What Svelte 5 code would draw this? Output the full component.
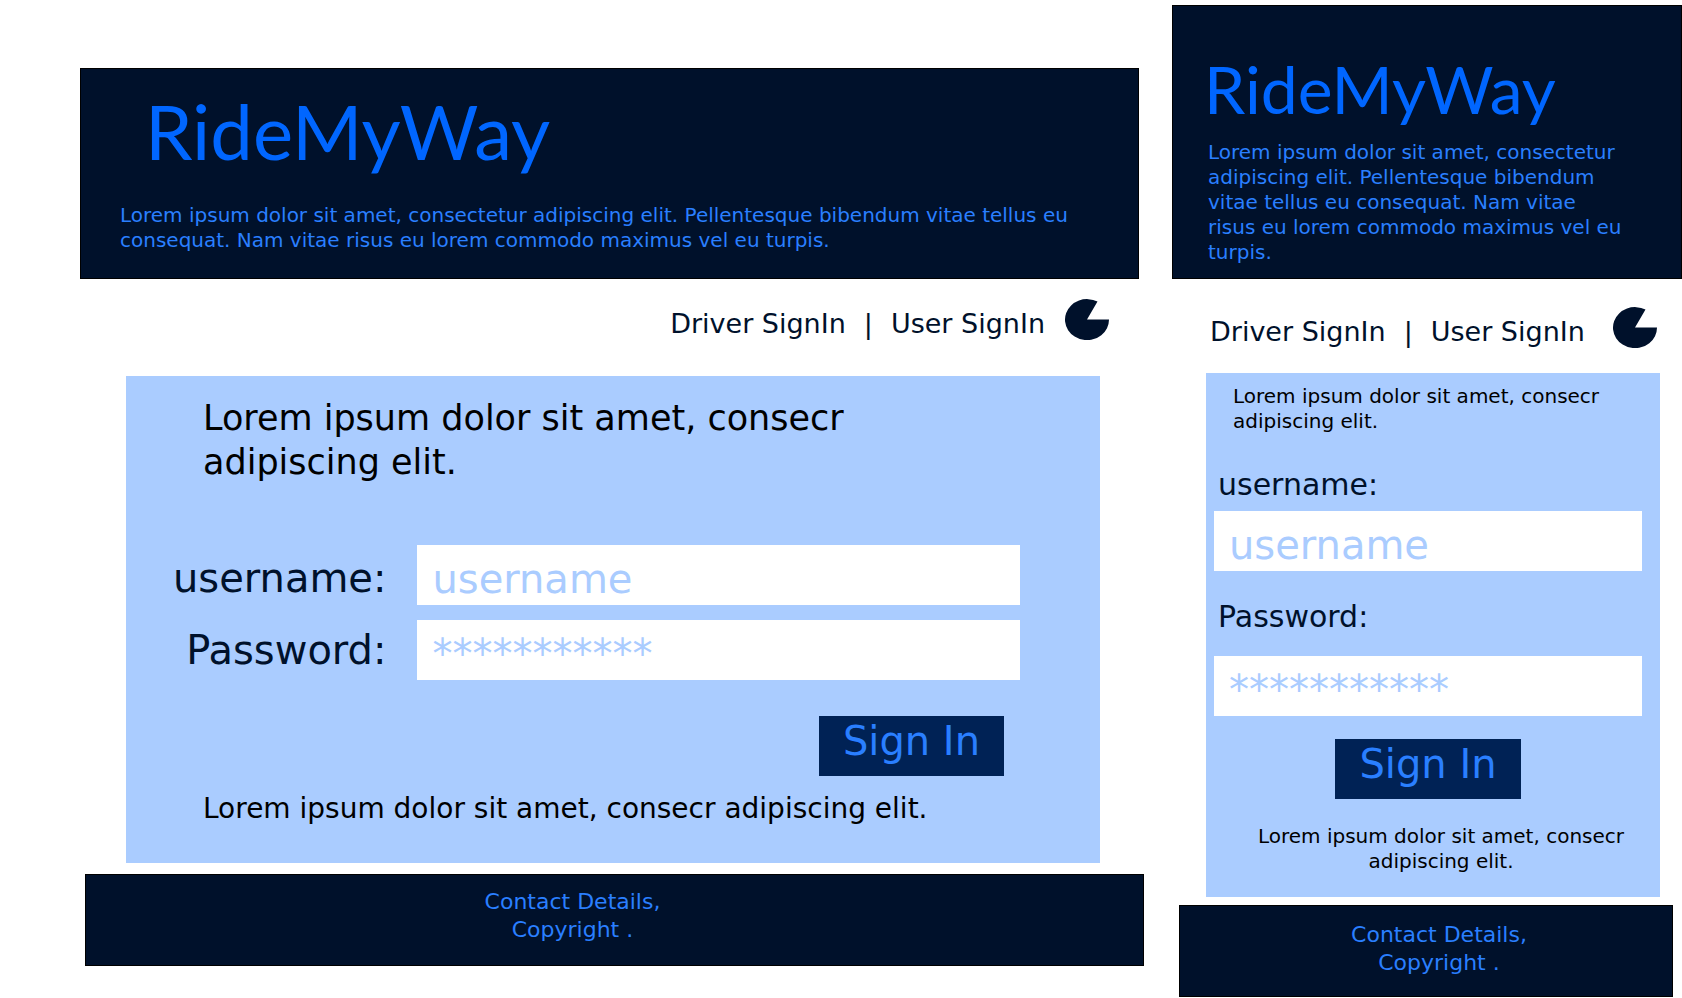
<script>
  const intro =
    'Lorem ipsum dolor sit amet, consectetur adipiscing elit. Pellentesque bibendum vitae tellus eu consequat. Nam vitae risus eu lorem commodo maximus vel eu turpis.';
  const note = 'Lorem ipsum dolor sit amet, consecr adipiscing elit.';
  const stars = '***********';
  const layouts = ['wide', 'narrow'];
</script>

<div class="board">
  {#each layouts as layout}
    <section class="screen {layout}">
      <header>
        <h1>RideMyWay</h1>
        <p>{intro}</p>
      </header>

      <nav>
        <a href="#driver">Driver SignIn</a>
        <span>|</span>
        <a class="last" href="#user">User SignIn</a>
        <svg width="44" height="41" viewBox="0 0 44 41" aria-hidden="true">
          <path d="M22 20.5H44A22 20.5 0 1 1 32.5 2.6Z" fill="#00112b" />
        </svg>
      </nav>

      <main>
        <p class="lead">{note}</p>
        <form onsubmit={(e) => e.preventDefault()}>
          <label class="name" for="{layout}-username">username:</label>
          <input id="{layout}-username" type="text" placeholder="username" />
          <label class="pass" for="{layout}-password">Password:</label>
          <input id="{layout}-password" type="password" placeholder={stars} />
          <button type="submit">Sign In</button>
        </form>
        <p class="note">{note}</p>
      </main>

      <footer>
        <p>Contact Details,<br />Copyright .</p>
      </footer>
    </section>
  {/each}
</div>

<style>
  :global(body) {
    background: #fff;
  }

  .board {
    display: grid;
    grid-template-columns: 1064fr 510fr;
    align-items: start;
    gap: 28px;
    padding-left: 80px;
    font-family: 'DejaVu Sans', sans-serif;
    color: #000;
  }

  .board :is(h1, p) {
    margin: 0;
  }

  .screen {
    display: flex;
    flex-direction: column;
    min-width: 0;
  }

  header,
  footer {
    background: #00112b;
    border: 1px solid #000;
    color: #2a7fff;
  }

  h1 {
    font-family: 'Trebuchet MS', Lato, sans-serif;
    font-weight: 400;
    color: #06f;
  }

  header p {
    font-size: 20px;
    line-height: 25px;
  }

  nav {
    display: flex;
    align-items: flex-end;
    gap: 18px;
    font-size: 27px;
    line-height: 32px;
    white-space: nowrap;
    color: #00112b;
  }

  nav a {
    color: inherit;
    text-decoration: none;
  }

  nav svg {
    display: block;
    flex: none;
    margin-left: 2px;
  }

  main {
    background: #acf;
  }

  form {
    display: grid;
  }

  label {
    color: #00112b;
  }

  input {
    box-sizing: border-box;
    width: 100%;
    height: 60px;
    padding: 8px 15px 0;
    border: 0;
    border-radius: 0;
    background: #fff;
    font: 40px 'DejaVu Sans', sans-serif;
    color: #00112b;
  }

  input::placeholder {
    color: #acf;
    opacity: 1;
  }

  button {
    height: 60px;
    padding: 0 24px 10px;
    border: 0;
    border-radius: 0;
    background: #025;
    font: 40px 'DejaVu Sans', sans-serif;
    color: #2a7fff;
  }

  footer {
    font-size: 22px;
    line-height: 28px;
    text-align: center;
  }

  .wide {
    padding-top: 68px;
  }

  .wide header {
    margin-right: 5px;
    padding: 14px 39px 25px;
  }

  .wide h1 {
    padding-left: 25px;
    margin-bottom: 24px;
    font-size: 76px;
    line-height: 96px;
  }

  .wide nav {
    justify-content: flex-end;
    padding: 20px 35px 36px 0;
  }

  .wide main {
    margin: 0 44px 11px 46px;
    padding: 20px 80px 37px 77px;
  }

  .wide .lead {
    font-size: 35px;
    line-height: 44px;
  }

  .wide form {
    grid-template-columns: auto 1fr;
    gap: 15px 31px;
    margin: 61px 0 15px -30px;
  }

  .wide label {
    align-self: center;
    text-align: right;
    font-size: 40px;
    line-height: 54px;
  }

  .wide .name {
    align-self: end;
  }

  .wide button {
    grid-column: 2;
    justify-self: end;
    margin: 21px 16px 0 0;
  }

  .wide .note {
    font-size: 28px;
    line-height: 35px;
  }

  .wide footer {
    margin-left: 5px;
    padding: 13px 84px 21px 0;
  }

  .narrow {
    padding-top: 5px;
  }

  .narrow header {
    padding: 41px 56px 13px 31px;
  }

  .narrow h1 {
    margin-bottom: 9px;
    font-size: 66px;
    line-height: 84px;
  }

  .narrow header p {
    padding-left: 4px;
  }

  .narrow nav {
    padding: 28px 25px 25px 38px;
  }

  .narrow .last {
    margin-right: auto;
  }

  .narrow main {
    margin: 0 22px 8px 34px;
    padding: 11px 18px 23px 8px;
  }

  .narrow .lead {
    padding-left: 19px;
    font-size: 20px;
    line-height: 25px;
  }

  .narrow label {
    padding-left: 4px;
    font-size: 30px;
    line-height: 38px;
  }

  .narrow .name {
    margin: 32px 0 7px;
  }

  .narrow .pass {
    margin: 27px 0 20px;
  }

  .narrow button {
    justify-self: center;
    margin: 23px 0 25px;
  }

  .narrow .note {
    padding-left: 26px;
    font-size: 20px;
    line-height: 25px;
    text-align: center;
  }

  .narrow footer {
    margin: 0 9px 0 7px;
    padding: 15px 0 19px 26px;
  }
</style>
